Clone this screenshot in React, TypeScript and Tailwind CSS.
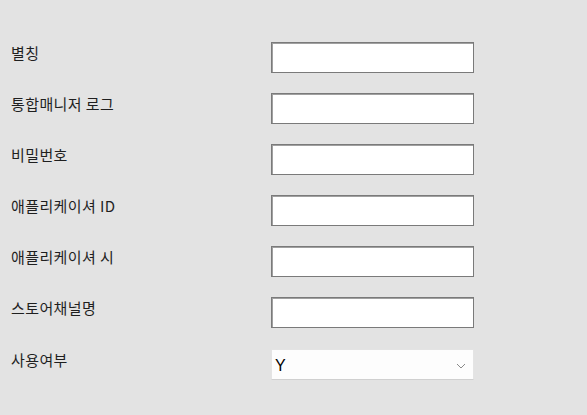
const fields = ['별칭', '통합매니저 로그', '비밀번호', '애플리케이셔 ID', '애플리케이셔 시', '스토어채널명'];

export default function App() {
  return (
    <div
      className="w-[587px] h-[415px] bg-[#e3e3e3] pl-[11px] pt-[42px] text-[#1f1f1f]"
      style={{ fontFamily: '"Noto Sans CJK KR", "Noto Sans", sans-serif' }}
    >
      <div className="flex flex-col gap-[20px]">
        {fields.map((label) => (
          <div key={label} className="flex items-start">
            <div className="w-[260px] text-[15px] leading-5 pt-[1px] tracking-[0.4px]">{label}</div>
            <input
              type="text"
              className="w-[203px] h-[31px] bg-white border border-[#7a7a7a] shadow-[inset_1px_1px_0_#a0a0a0] outline-none"
            />
          </div>
        ))}
        <div className="flex items-start mt-[1px]">
          <div className="w-[260px] text-[15px] leading-5 pt-[1px] tracking-[0.4px]">사용여부</div>
          <div className="relative w-[203px] h-[31px] bg-[#fdfdfd] border border-[#e4e4e4] border-b-[#d0d0d0] flex items-center pl-[3px] pt-[2px]">
            <span className="text-[16px] text-black" style={{ fontFamily: '"Liberation Sans", Arial, sans-serif' }}>
              Y
            </span>
            <svg
              className="absolute right-[7px] top-[13px]"
              width="10"
              height="6"
              viewBox="0 0 10 6"
              fill="none"
              stroke="#8a8a8a"
              strokeWidth="1"
            >
              <path d="M1 1l4 4 4-4" />
            </svg>
          </div>
        </div>
      </div>
    </div>
  );
}
